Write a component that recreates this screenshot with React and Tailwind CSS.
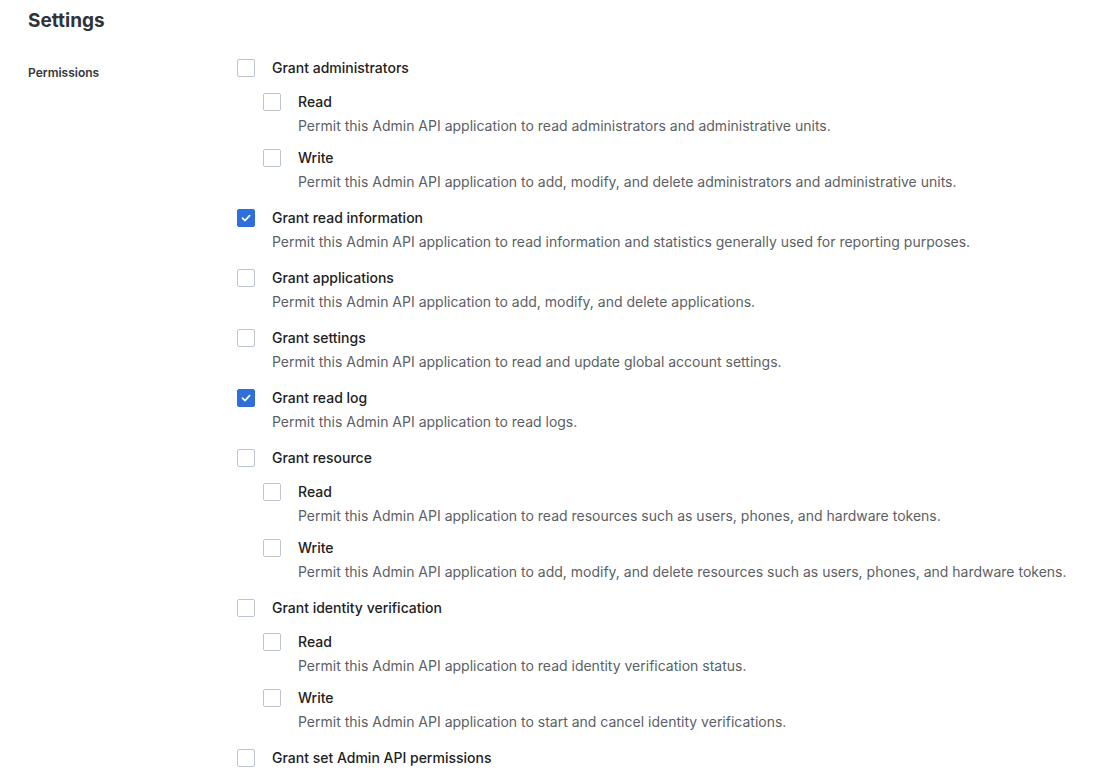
import React, { useState } from 'react';

const permissions = [
  {
    id: 'admins',
    label: 'Grant administrators',
    children: [
      { id: 'admins_read', label: 'Read', desc: 'Permit this Admin API application to read administrators and administrative units.' },
      { id: 'admins_write', label: 'Write', desc: 'Permit this Admin API application to add, modify, and delete administrators and administrative units.' },
    ],
  },
  { id: 'info', label: 'Grant read information', desc: 'Permit this Admin API application to read information and statistics generally used for reporting purposes.' },
  { id: 'apps', label: 'Grant applications', desc: 'Permit this Admin API application to add, modify, and delete applications.' },
  { id: 'settings', label: 'Grant settings', desc: 'Permit this Admin API application to read and update global account settings.' },
  { id: 'log', label: 'Grant read log', desc: 'Permit this Admin API application to read logs.' },
  {
    id: 'resource',
    label: 'Grant resource',
    children: [
      { id: 'resource_read', label: 'Read', desc: 'Permit this Admin API application to read resources such as users, phones, and hardware tokens.' },
      { id: 'resource_write', label: 'Write', desc: 'Permit this Admin API application to add, modify, and delete resources such as users, phones, and hardware tokens.' },
    ],
  },
  {
    id: 'idv',
    label: 'Grant identity verification',
    children: [
      { id: 'idv_read', label: 'Read', desc: 'Permit this Admin API application to read identity verification status.' },
      { id: 'idv_write', label: 'Write', desc: 'Permit this Admin API application to start and cancel identity verifications.' },
    ],
  },
  { id: 'perms', label: 'Grant set Admin API permissions' },
];

function Checkbox({ checked, onChange }) {
  return (
    <button
      type="button"
      onClick={onChange}
      className={`mt-[3px] flex h-[18px] w-[18px] shrink-0 items-center justify-center rounded-[2px] border ${
        checked ? 'border-[#2f6fdb] bg-[#2f6fdb]' : 'border-[#bcc5cf] bg-white'
      }`}
    >
      {checked && (
        <svg width="12" height="12" viewBox="0 0 12 12" fill="none">
          <path d="M2.5 6.2 L5 8.6 L9.6 3.6" stroke="white" strokeWidth="1.7" strokeLinecap="round" strokeLinejoin="round" />
        </svg>
      )}
    </button>
  );
}

function Item({ item, checked, toggle }) {
  return (
    <div className="flex gap-[17px]">
      <Checkbox checked={!!checked[item.id]} onChange={() => toggle(item.id)} />
      <div className="flex flex-col">
        <span className="text-[14px] font-medium leading-6 text-[#222]">{item.label}</span>
        {item.desc && <span className="text-[14px] leading-6 text-[#5b5f66]">{item.desc}</span>}
      </div>
    </div>
  );
}

export default function App() {
  const [checked, setChecked] = useState({ info: true, log: true });
  const toggle = (id) => setChecked({ ...checked, [id]: !checked[id] });

  return (
    <div className="min-h-screen bg-white px-7 pt-[7px]" style={{ fontFamily: 'Inter, "Noto Sans", sans-serif' }}>
      <h2 className="text-[19px] font-bold leading-[28px] text-[#303338]">Settings</h2>
      <div className="mt-[21px] flex">
        <div className="w-[209px] shrink-0 pt-[9px] text-[12px] font-semibold leading-4 text-[#34373c]">Permissions</div>
        <div className="flex flex-col gap-3">
          {permissions.map((p) => (
            <div key={p.id} className="flex flex-col">
              <Item item={p} checked={checked} toggle={toggle} />
              {p.children && (
                <div className="mt-2.5 flex flex-col gap-2 pl-[26px]">
                  {p.children.map((c) => (
                    <Item key={c.id} item={c} checked={checked} toggle={toggle} />
                  ))}
                </div>
              )}
            </div>
          ))}
        </div>
      </div>
    </div>
  );
}
